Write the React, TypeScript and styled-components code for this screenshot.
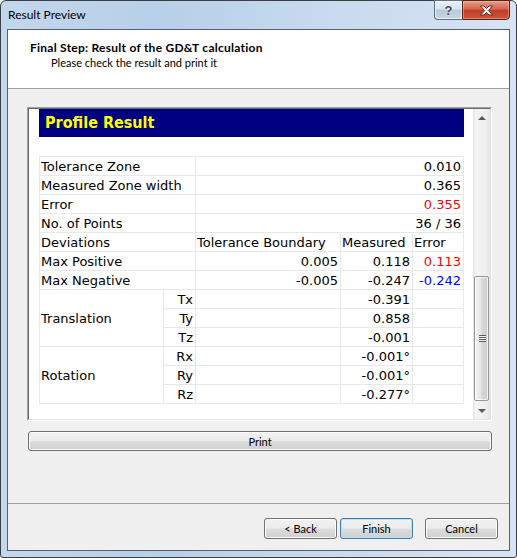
import styled, { createGlobalStyle } from "styled-components";

const uiFont = `"Segoe UI", Lato, "Liberation Sans", sans-serif`;
const gridFont = `Verdana, "DejaVu Sans", sans-serif`;

const GlobalStyle = createGlobalStyle`
  html, body {
    margin: 0;
    padding: 0;
    background: #ffffff;
  }
  body {
    width: 517px;
    height: 558px;
    overflow: hidden;
  }
`;

const Window = styled.div`
  box-sizing: border-box;
  width: 517px;
  height: 558px;
  display: flex;
  flex-direction: column;
  border: 1px solid #3a3f46;
  border-radius: 6px 6px 3px 3px;
  padding: 0 6px 6px;
  background: linear-gradient(to right, #c3d7ed 0%, #b7cfe8 30%, #c6d9ee 60%, #d6e4f3 100%);
  font-family: ${uiFont};
  font-size: 12px;
  color: #000;
`;

const TitleBar = styled.div`
  height: 28px;
  display: flex;
  align-items: flex-start;
`;

const Caption = styled.div`
  flex: 1;
  padding-left: 1px;
  line-height: 28px;
  color: #000;
`;

const CaptionButtons = styled.div`
  display: flex;
`;

const HelpButton = styled.div`
  box-sizing: border-box;
  width: 28px;
  height: 20px;
  margin-top: -1px;
  border: 1px solid #5d6e85;
  border-right: none;
  border-radius: 0 0 0 4px;
  background: linear-gradient(to bottom, #e9eff6 0%, #d8e2ee 45%, #b9c8da 50%, #c9d6e5 100%);
  box-shadow: inset 0 0 0 1px rgba(255, 255, 255, 0.6);
  display: flex;
  align-items: center;
  justify-content: center;
  font-family: "Liberation Sans", sans-serif;
  font-weight: bold;
  font-size: 13px;
  color: #3d4b5e;
  text-shadow: 0 0 2px #ffffff;
`;

const CloseButton = styled.div`
  box-sizing: border-box;
  width: 48px;
  height: 20px;
  margin-top: -1px;
  border: 1px solid #4e2519;
  border-radius: 0 0 4px 0;
  background: linear-gradient(to bottom, #e59c8a 0%, #d4644d 45%, #c23d25 52%, #cb553b 100%);
  box-shadow: inset 0 0 0 1px rgba(255, 200, 185, 0.45);
  display: flex;
  align-items: center;
  justify-content: center;
`;

const Client = styled.div`
  flex: 1;
  display: flex;
  flex-direction: column;
  border: 1px solid #56606e;
  background: #f0f0f0;
  min-height: 0;
`;

const Header = styled.div`
  height: 59px;
  box-sizing: border-box;
  padding: 10px 0 0 22px;
  background: #ffffff;
  border-bottom: 1px solid #a0a0a0;
  line-height: 15px;
`;

const HeaderTitle = styled.div`
  font-weight: bold;
  letter-spacing: 0.25px;
`;

const HeaderSub = styled.div`
  padding-left: 21px;
  font-size: 11px;
`;

const Body = styled.div`
  flex: 1;
  display: flex;
  flex-direction: column;
  padding: 18px 17px 0 19px;
`;

const Panel = styled.div`
  height: 314px;
  box-sizing: border-box;
  border: 1px solid;
  border-color: #a0a0a0 #ffffff #ffffff #a0a0a0;
  display: flex;
`;

const PanelInner = styled.div`
  flex: 1;
  display: flex;
  border: 1px solid;
  border-color: #696969 #e3e3e3 #e3e3e3 #696969;
  background: #ffffff;
  overflow: hidden;
`;

const Content = styled.div`
  flex: 1;
  padding: 0 9px 0 10px;
  font-family: ${gridFont};
  font-size: 13px;
`;

const ResultBanner = styled.div`
  height: 28px;
  line-height: 28px;
  padding-left: 6px;
  background: #000080;
  color: #ffff00;
  font-family: "DejaVu Sans Condensed", "DejaVu Sans", sans-serif;
  font-stretch: condensed;
  font-weight: bold;
  font-size: 16px;
`;

const Grid = styled.table`
  margin-top: 19px;
  width: 424px;
  table-layout: fixed;
  border-collapse: collapse;
  color: #000;

  tr {
    height: 19px;
  }
`;

const Cell = styled.td<{ $align?: "left" | "right"; $tone?: "red" | "blue" }>`
  border: 1px solid #e8e8e8;
  padding: 0 2px 0 1px;
  line-height: 17px;
  white-space: nowrap;
  overflow: hidden;
  text-align: ${(p) => p.$align ?? "left"};
  color: ${(p) => (p.$tone === "red" ? "#ff0000" : p.$tone === "blue" ? "#0000ff" : "#000000")};
`;

const ScrollBar = styled.div`
  width: 17px;
  display: flex;
  flex-direction: column;
  background: linear-gradient(to right, #e4e4e4 0%, #f4f4f4 15%, #efefef 80%, #e4e4e4 100%);
`;

const ArrowBox = styled.div`
  height: 17px;
  display: flex;
  align-items: center;
  justify-content: center;
`;

const Arrow = styled.div<{ $dir: "up" | "down" }>`
  width: 0;
  height: 0;
  border-left: 4px solid transparent;
  border-right: 4px solid transparent;
  ${(p) => (p.$dir === "up" ? "border-bottom: 4px solid #5a5a5a;" : "border-top: 4px solid #5a5a5a;")}
`;

const Track = styled.div`
  flex: 1;
  display: flex;
  flex-direction: column;
  justify-content: flex-end;
  padding: 0 1px 1px;
`;

const Thumb = styled.div`
  height: 125px;
  box-sizing: border-box;
  border: 1px solid #979797;
  border-radius: 2px;
  background: linear-gradient(to right, #f2f2f2 0%, #e6e6e6 45%, #d6d6d6 55%, #cfcfcf 100%);
  box-shadow: inset 0 0 0 1px rgba(255, 255, 255, 0.7);
  display: flex;
  align-items: center;
  justify-content: center;
`;

const Grip = styled.div`
  width: 7px;
  height: 7px;
  margin-left: 1px;
  background: repeating-linear-gradient(to bottom, #5c5c5c 0 1px, #f4f4f4 1px 2px);
`;

const Button = styled.button<{ $default?: boolean }>`
  box-sizing: border-box;
  height: 21px;
  padding: 0;
  border: 1px solid ${(p) => (p.$default ? "#3c7fb1" : "#707070")};
  border-radius: 3px;
  background: linear-gradient(to bottom, #f2f2f2 0%, #ebebeb 48%, #dddddd 52%, #cfcfcf 100%);
  box-shadow: inset 0 0 0 1px ${(p) => (p.$default ? "#b9e2f8" : "#fcfcfc")};
  font-family: ${uiFont};
  font-size: 11px;
  color: #000;
`;

const PrintButton = styled(Button)`
  margin: 10px 0 0 1px;
  height: 20px;
`;

const Footer = styled.div`
  display: flex;
  justify-content: flex-end;
  align-items: flex-start;
  height: 47px;
  box-sizing: border-box;
  padding: 14px 11px 0 0;
  border-top: 1px solid #a0a0a0;
`;

const FooterButton = styled(Button)<{ $gap?: number }>`
  width: 73px;
  margin-left: ${(p) => p.$gap ?? 0}px;
`;

type Tone = "red" | "blue";

const summary: { label: string; value: string; tone?: Tone }[] = [
  { label: "Tolerance Zone", value: "0.010" },
  { label: "Measured Zone width", value: "0.365" },
  { label: "Error", value: "0.355", tone: "red" },
  { label: "No. of Points", value: "36 / 36" },
];

const extremes: { label: string; bound: string; measured: string; error: string; tone: Tone }[] = [
  { label: "Max Positive", bound: "0.005", measured: "0.118", error: "0.113", tone: "red" },
  { label: "Max Negative", bound: "-0.005", measured: "-0.247", error: "-0.242", tone: "blue" },
];

const groups = [
  {
    name: "Translation",
    axes: [
      { axis: "Tx", value: "-0.391" },
      { axis: "Ty", value: "0.858" },
      { axis: "Tz", value: "-0.001" },
    ],
  },
  {
    name: "Rotation",
    axes: [
      { axis: "Rx", value: "-0.001°" },
      { axis: "Ry", value: "-0.001°" },
      { axis: "Rz", value: "-0.277°" },
    ],
  },
];

function CloseGlyph() {
  return (
    <svg width="15" height="11" viewBox="0 0 15 11">
      <path
        d="M1.5 1 L5 1 L7.5 3.6 L10 1 L13.5 1 L9.4 5.5 L13.5 10 L10 10 L7.5 7.4 L5 10 L1.5 10 L5.6 5.5 Z"
        fill="#ffffff"
        stroke="#5a2a20"
        strokeWidth="1"
        strokeLinejoin="round"
      />
    </svg>
  );
}

function ResultTable() {
  return (
    <Grid>
      <colgroup>
        <col style={{ width: 124 }} />
        <col style={{ width: 32 }} />
        <col style={{ width: 145 }} />
        <col style={{ width: 72 }} />
        <col style={{ width: 51 }} />
      </colgroup>
      <tbody>
        {summary.map((row) => (
          <tr key={row.label}>
            <Cell colSpan={2}>{row.label}</Cell>
            <Cell colSpan={3} $align="right" $tone={row.tone}>
              {row.value}
            </Cell>
          </tr>
        ))}
        <tr>
          <Cell colSpan={2}>Deviations</Cell>
          <Cell>Tolerance Boundary</Cell>
          <Cell>Measured</Cell>
          <Cell>Error</Cell>
        </tr>
        {extremes.map((row) => (
          <tr key={row.label}>
            <Cell colSpan={2}>{row.label}</Cell>
            <Cell $align="right">{row.bound}</Cell>
            <Cell $align="right">{row.measured}</Cell>
            <Cell $align="right" $tone={row.tone}>
              {row.error}
            </Cell>
          </tr>
        ))}
        {groups.map((g) =>
          g.axes.map((a, i) => (
            <tr key={a.axis}>
              {i === 0 && <Cell rowSpan={g.axes.length}>{g.name}</Cell>}
              <Cell $align="right">{a.axis}</Cell>
              <Cell />
              <Cell $align="right">{a.value}</Cell>
              <Cell />
            </tr>
          ))
        )}
      </tbody>
    </Grid>
  );
}

export default function App() {
  return (
    <>
      <GlobalStyle />
      <Window>
        <TitleBar>
          <Caption>Result Preview</Caption>
          <CaptionButtons>
            <HelpButton>?</HelpButton>
            <CloseButton>
              <CloseGlyph />
            </CloseButton>
          </CaptionButtons>
        </TitleBar>
        <Client>
          <Header>
            <HeaderTitle>Final Step: Result of the GD&amp;T calculation</HeaderTitle>
            <HeaderSub>Please check the result and print it</HeaderSub>
          </Header>
          <Body>
            <Panel>
              <PanelInner>
                <Content>
                  <ResultBanner>Profile Result</ResultBanner>
                  <ResultTable />
                </Content>
                <ScrollBar>
                  <ArrowBox>
                    <Arrow $dir="up" />
                  </ArrowBox>
                  <Track>
                    <Thumb>
                      <Grip />
                    </Thumb>
                  </Track>
                  <ArrowBox>
                    <Arrow $dir="down" />
                  </ArrowBox>
                </ScrollBar>
              </PanelInner>
            </Panel>
            <PrintButton>Print</PrintButton>
          </Body>
          <Footer>
            <FooterButton>&lt; Back</FooterButton>
            <FooterButton $default $gap={3}>
              Finish
            </FooterButton>
            <FooterButton $gap={12}>Cancel</FooterButton>
          </Footer>
        </Client>
      </Window>
    </>
  );
}
